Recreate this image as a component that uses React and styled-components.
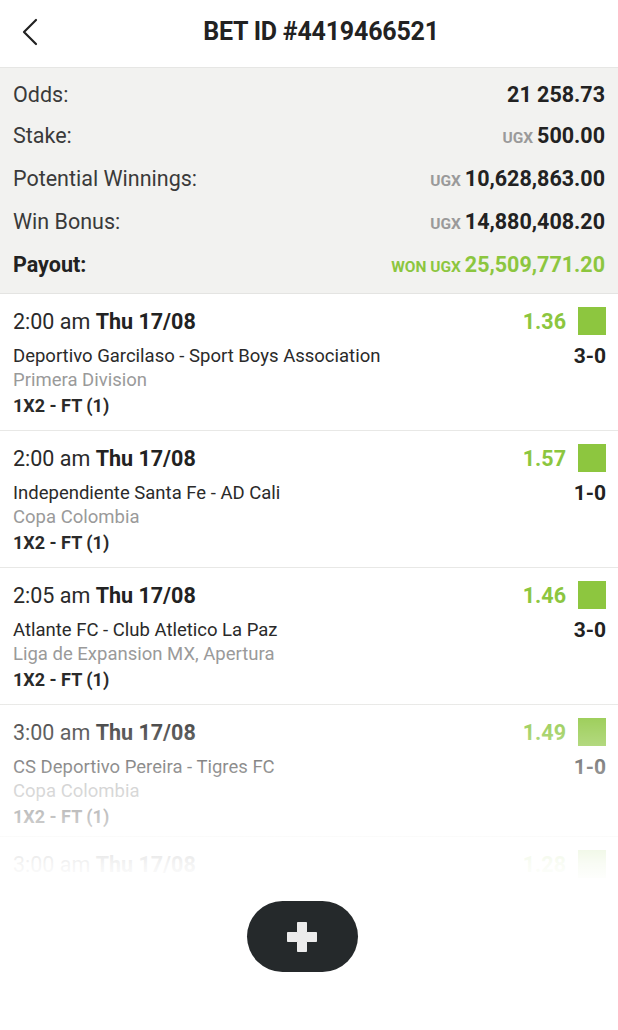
import React from 'react'
import styled, { createGlobalStyle } from 'styled-components'

const GlobalStyle = createGlobalStyle`
  html, body { margin: 0; padding: 0; background: #fff; }
  body { font-family: Roboto, "Noto Sans", sans-serif; color: #222; }
`

const summary = [
  { label: 'Odds:', value: '21 258.73' },
  { label: 'Stake:', cur: 'UGX', value: '500.00' },
  { label: 'Potential Winnings:', cur: 'UGX', value: '10,628,863.00' },
  { label: 'Win Bonus:', cur: 'UGX', value: '14,880,408.20' },
  { label: 'Payout:', cur: 'WON UGX', value: '25,509,771.20', won: true },
]

const bets = [
  { time: '2:00 am', day: 'Thu 17/08', odds: '1.36', teams: 'Deportivo Garcilaso - Sport Boys Association', league: 'Primera Division', market: '1X2 - FT (1)', score: '3-0' },
  { time: '2:00 am', day: 'Thu 17/08', odds: '1.57', teams: 'Independiente Santa Fe - AD Cali', league: 'Copa Colombia', market: '1X2 - FT (1)', score: '1-0' },
  { time: '2:05 am', day: 'Thu 17/08', odds: '1.46', teams: 'Atlante FC - Club Atletico La Paz', league: 'Liga de Expansion MX, Apertura', market: '1X2 - FT (1)', score: '3-0' },
  { time: '3:00 am', day: 'Thu 17/08', odds: '1.49', teams: 'CS Deportivo Pereira - Tigres FC', league: 'Copa Colombia', market: '1X2 - FT (1)', score: '1-0', short: true },
  { time: '3:00 am', day: 'Thu 17/08', odds: '1.28', teams: 'Millonarios - Atletico Nacional', league: 'Copa Colombia', market: '1X2 - FT (1)', score: '2-0' },
]

function App() {
  return (
    <Page>
      <GlobalStyle />
      <Header>
        <Back>
          <svg width="18" height="28" viewBox="0 0 18 28" fill="none">
            <path d="M15 2 L3 14 L15 26" stroke="#222" strokeWidth="2.2" strokeLinecap="round" strokeLinejoin="round" />
          </svg>
        </Back>
        <Title>BET ID #4419466521</Title>
      </Header>
      <Summary>
        {summary.map((s, i) => (
          <SumRow key={s.label} first={i === 0}>
            <SumLabel bold={s.won}>{s.label}</SumLabel>
            <SumValue won={s.won}>
              {s.cur && <Cur won={s.won}>{s.cur}</Cur>}
              {s.value}
            </SumValue>
          </SumRow>
        ))}
      </Summary>
      <List>
        {bets.map((b, i) => (
          <Bet key={i} short={b.short}>
            <TopLine>
              <Time>{b.time} <b>{b.day}</b></Time>
              <OddsBox>
                <Odds>{b.odds}</Odds>
                <Status />
              </OddsBox>
            </TopLine>
            <MidLine>
              <Teams>{b.teams}</Teams>
              <Score>{b.score}</Score>
            </MidLine>
            <League>{b.league}</League>
            <Market>{b.market}</Market>
          </Bet>
        ))}
      </List>
      <Footer>
        <AddButton>
          <svg width="32" height="32" viewBox="0 0 32 32">
            <path d="M11.5 1.5h9v10h10v9h-10v10h-9v-10h-10v-9h10z" fill="#ececec" stroke="#ececec" strokeWidth="1" strokeLinejoin="round" />
          </svg>
        </AddButton>
      </Footer>
    </Page>
  )
}

const Page = styled.div`
  width: 618px;
  height: 1030px;
  display: flex;
  flex-direction: column;
  overflow: hidden;
  background: #fff;
`

const Header = styled.div`
  height: 67px;
  flex-shrink: 0;
  display: flex;
  align-items: center;
  justify-content: center;
  position: relative;
  border-bottom: 1px solid #e6e6e4;
`

const Back = styled.div`
  position: absolute;
  left: 21px;
  top: 18px;
`

const Title = styled.h1`
  margin: 0 0 5px 24px;
  font-size: 25px;
  font-weight: 700;
  color: #222;
  letter-spacing: -0.2px;
`

const Summary = styled.div`
  background: #f2f2f0;
  padding: 8px 13px 7px;
  border-bottom: 1px solid #e4e4e2;
  flex-shrink: 0;
`

const SumRow = styled.div`
  display: flex;
  justify-content: space-between;
  align-items: baseline;
  height: ${(p) => (p.first ? 38 : 43)}px;
  line-height: ${(p) => (p.first ? 38 : 43)}px;
`

const SumLabel = styled.span`
  font-size: 21.5px;
  font-weight: ${(p) => (p.bold ? 700 : 400)};
  color: ${(p) => (p.bold ? '#222' : '#3a3a3a')};
`

const SumValue = styled.span`
  font-size: 21.5px;
  font-weight: 700;
  color: ${(p) => (p.won ? '#8cc63f' : '#222')};
`

const Cur = styled.span`
  font-size: 15.5px;
  font-weight: 700;
  margin-right: 4px;
  color: ${(p) => (p.won ? '#8cc63f' : '#9a9a9a')};
`

const List = styled.div`
  position: relative;
  height: 589px;
  flex-shrink: 0;
  overflow: hidden;
  &::after {
    content: '';
    position: absolute;
    left: 0;
    right: 0;
    top: 400px;
    bottom: 0;
    background: linear-gradient(rgba(255,255,255,0), rgba(255,255,255,0.55) 45%, rgba(255,255,255,0.95) 90%, #fff);
  }
`

const Bet = styled.div`
  height: ${(p) => (p.short ? 132 : 137)}px;
  box-sizing: border-box;
  padding: 13px 12px 0 13px;
  border-bottom: 1px solid #e8e8e6;
`

const TopLine = styled.div`
  display: flex;
  justify-content: space-between;
  align-items: center;
  height: 28px;
`

const Time = styled.span`
  font-size: 21.5px;
  color: #2a2a2a;
  b { font-weight: 700; color: #222; }
`

const OddsBox = styled.div`
  display: flex;
  align-items: center;
  gap: 12px;
`

const Odds = styled.span`
  font-size: 21.5px;
  font-weight: 700;
  color: #8cc63f;
`

const Status = styled.div`
  width: 28px;
  height: 28px;
  background: #8dc63f;
`

const MidLine = styled.div`
  display: flex;
  justify-content: space-between;
  align-items: center;
  margin-top: 10px;
  height: 22px;
`

const Teams = styled.span`
  font-size: 18.5px;
  color: #2a2a2a;
`

const Score = styled.span`
  font-size: 21px;
  font-weight: 700;
  color: #222;
`

const League = styled.div`
  font-size: 18.5px;
  color: #9a9a9a;
  height: 25px;
  line-height: 25px;
  margin-top: 1px;
`

const Market = styled.div`
  font-size: 18px;
  font-weight: 700;
  color: #2a2a2a;
  height: 25px;
  line-height: 25px;
`

const Footer = styled.div`
  flex: 1;
  display: flex;
  justify-content: center;
  padding: 18px 14px 0 0;
`

const AddButton = styled.button`
  width: 111px;
  height: 71px;
  border: none;
  border-radius: 36px;
  background: #25292b;
  display: flex;
  align-items: center;
  justify-content: center;
  padding: 0;
  cursor: pointer;
`

export default App
